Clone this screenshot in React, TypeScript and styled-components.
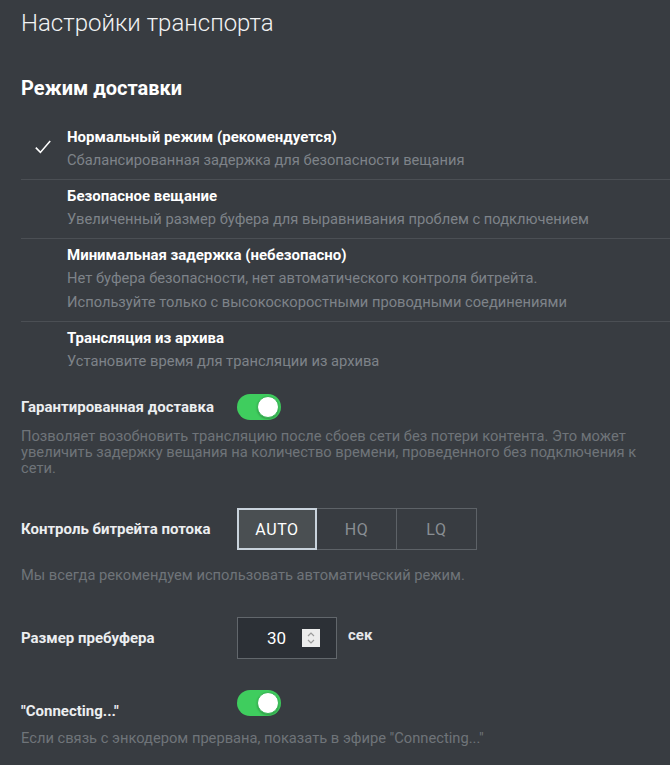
import React, { useState } from 'react';
import styled, { createGlobalStyle } from 'styled-components';

const GlobalStyle = createGlobalStyle`
  html, body {
    margin: 0;
    padding: 0;
    background: #383c41;
  }
  body {
    font-family: Roboto, 'Noto Sans', sans-serif;
    color: #fff;
  }
`;

const Page = styled.div`
  width: 670px;
  height: 765px;
  overflow: hidden;
  background: #383c41;
  padding: 0 0 0 21px;
  box-sizing: border-box;
`;

const Title = styled.h1`
  margin: 0;
  padding-top: 8px;
  font-size: 24px;
  font-weight: 300;
  line-height: 30px;
  color: #f2f3f4;
`;

const SectionTitle = styled.h2`
  margin: 37px 0 0;
  font-size: 20px;
  font-weight: 700;
  line-height: 26px;
  color: #fff;
`;

const ModeList = styled.ul`
  list-style: none;
  margin: 20px 0 0;
  padding: 0;
`;

const ModeItem = styled.li<{ $last?: boolean }>`
  display: grid;
  grid-template-columns: 46px 1fr;
  padding: 5px 0 7px;
  border-bottom: 1px solid ${(p) => (p.$last ? 'transparent' : '#4b4f54')};
  cursor: pointer;
`;

const CheckCell = styled.div`
  padding: 13px 0 0 14px;
`;

const ModeName = styled.div`
  font-size: 15px;
  font-weight: 700;
  line-height: 22px;
  color: #fff;
`;

const ModeDesc = styled.div`
  font-size: 14.7px;
  line-height: 24px;
  color: #7e8389;
`;

const SettingRow = styled.div<{ $top: number; $align?: string }>`
  display: flex;
  align-items: ${(p) => p.$align || 'center'};
  margin-top: ${(p) => p.$top}px;
`;

const Label = styled.div<{ $pad?: number }>`
  width: 216px;
  padding-top: ${(p) => p.$pad || 0}px;
  font-size: 15px;
  font-weight: 700;
  line-height: 18px;
  color: #eceef0;
`;

const Hint = styled.p<{ $top: number }>`
  margin: ${(p) => p.$top}px 0 0;
  padding-right: 18px;
  font-size: 14.7px;
  line-height: 16px;
  color: #6f7479;
`;

const ToggleTrack = styled.button<{ $on: boolean }>`
  position: relative;
  width: 44px;
  height: 26px;
  padding: 0;
  border: none;
  border-radius: 13px;
  background: ${(p) => (p.$on ? '#3fcd5e' : '#5a5f64')};
  cursor: pointer;
`;

const ToggleKnob = styled.span<{ $on: boolean }>`
  position: absolute;
  top: 2px;
  left: ${(p) => (p.$on ? '20px' : '2px')};
  width: 22px;
  height: 22px;
  border-radius: 50%;
  background: #fff;
  box-sizing: border-box;
  border: 1px solid #35b553;
  box-shadow: 0 1px 2px rgba(0, 0, 0, 0.25);
`;

const Segments = styled.div`
  display: flex;
`;

const Segment = styled.button<{ $active: boolean }>`
  width: 81px;
  height: 42px;
  margin-left: -1px;
  box-sizing: border-box;
  border-style: solid;
  border-color: ${(p) => (p.$active ? '#c9d3dc' : '#5d6267')};
  border-width: ${(p) => (p.$active ? '2px' : '1px')};
  background: ${(p) => (p.$active ? '#4a4f52' : 'transparent')};
  color: ${(p) => (p.$active ? '#fff' : '#898e93')};
  font-family: Roboto, sans-serif;
  font-size: 16px;
  letter-spacing: 0.6px;
  cursor: pointer;
  position: relative;
  z-index: ${(p) => (p.$active ? 1 : 0)};
  &:first-child {
    width: 80px;
    margin-left: 0;
  }
`;

const NumberBox = styled.div`
  display: flex;
  align-items: center;
  justify-content: flex-end;
  width: 100px;
  height: 42px;
  box-sizing: border-box;
  border: 1px solid #62676c;
  background: #2c3036;
  padding: 0 16px 0 0;
  gap: 16px;
`;

const NumberValue = styled.span`
  font-size: 17px;
  color: #fff;
`;

const Spinner = styled.div`
  width: 18px;
  height: 18px;
  background: #ececec;
  display: flex;
  align-items: center;
  justify-content: center;
`;

const Unit = styled.span`
  margin-left: 11px;
  margin-top: -6px;
  font-size: 15px;
  font-weight: 700;
  color: #e6e8ea;
`;

const modes = [
  {
    name: 'Нормальный режим (рекомендуется)',
    desc: ['Сбалансированная задержка для безопасности вещания'],
  },
  {
    name: 'Безопасное вещание',
    desc: ['Увеличенный размер буфера для выравнивания проблем с подключением'],
  },
  {
    name: 'Минимальная задержка (небезопасно)',
    desc: [
      'Нет буфера безопасности, нет автоматического контроля битрейта.',
      'Используйте только с высокоскоростными проводными соединениями',
    ],
  },
  {
    name: 'Трансляция из архива',
    desc: ['Установите время для трансляции из архива'],
  },
];

const Toggle: React.FC<{ on: boolean; onChange: () => void }> = ({ on, onChange }) => (
  <ToggleTrack $on={on} onClick={onChange}>
    <ToggleKnob $on={on} />
  </ToggleTrack>
);

export default function App() {
  const [mode, setMode] = useState(0);
  const [guaranteed, setGuaranteed] = useState(true);
  const [bitrate, setBitrate] = useState('AUTO');
  const [connecting, setConnecting] = useState(true);

  return (
    <Page>
      <GlobalStyle />
      <Title>Настройки транспорта</Title>
      <SectionTitle>Режим доставки</SectionTitle>
      <ModeList>
        {modes.map((m, i) => (
          <ModeItem key={m.name} $last={i === modes.length - 1} onClick={() => setMode(i)}>
            <CheckCell>
              {mode === i && (
                <svg width="16" height="14" viewBox="0 0 16 14">
                  <path d="M0.8 7.6 L5.4 12.4 L15.2 1" fill="none" stroke="#fff" strokeWidth="1.6" />
                </svg>
              )}
            </CheckCell>
            <div>
              <ModeName>{m.name}</ModeName>
              {m.desc.map((d) => (
                <ModeDesc key={d}>{d}</ModeDesc>
              ))}
            </div>
          </ModeItem>
        ))}
      </ModeList>

      <SettingRow $top={13}>
        <Label>Гарантированная доставка</Label>
        <Toggle on={guaranteed} onChange={() => setGuaranteed(!guaranteed)} />
      </SettingRow>
      <Hint $top={8}>
        Позволяет возобновить трансляцию после сбоев сети без потери контента. Это может увеличить
        задержку вещания на количество времени, проведенного без подключения к сети.
      </Hint>

      <SettingRow $top={32}>
        <Label>Контроль битрейта потока</Label>
        <Segments>
          {['AUTO', 'HQ', 'LQ'].map((b) => (
            <Segment key={b} $active={bitrate === b} onClick={() => setBitrate(b)}>
              {b}
            </Segment>
          ))}
        </Segments>
      </SettingRow>
      <Hint $top={17}>Мы всегда рекомендуем использовать автоматический режим.</Hint>

      <SettingRow $top={34}>
        <Label>Размер пребуфера</Label>
        <NumberBox>
          <NumberValue>30</NumberValue>
          <Spinner>
            <svg width="10" height="14" viewBox="0 0 10 14">
              <path d="M2 5 L5 2 L8 5 M2 9 L5 12 L8 9" fill="none" stroke="#9a9a9a" strokeWidth="1.2" />
            </svg>
          </Spinner>
        </NumberBox>
        <Unit>сек</Unit>
      </SettingRow>

      <SettingRow $top={31} $align="flex-start">
        <Label $pad={12}>"Connecting..."</Label>
        <Toggle on={connecting} onChange={() => setConnecting(!connecting)} />
      </SettingRow>
      <Hint $top={10}>Если связь с энкодером прервана, показать в эфире "Connecting..."</Hint>
    </Page>
  );
}
